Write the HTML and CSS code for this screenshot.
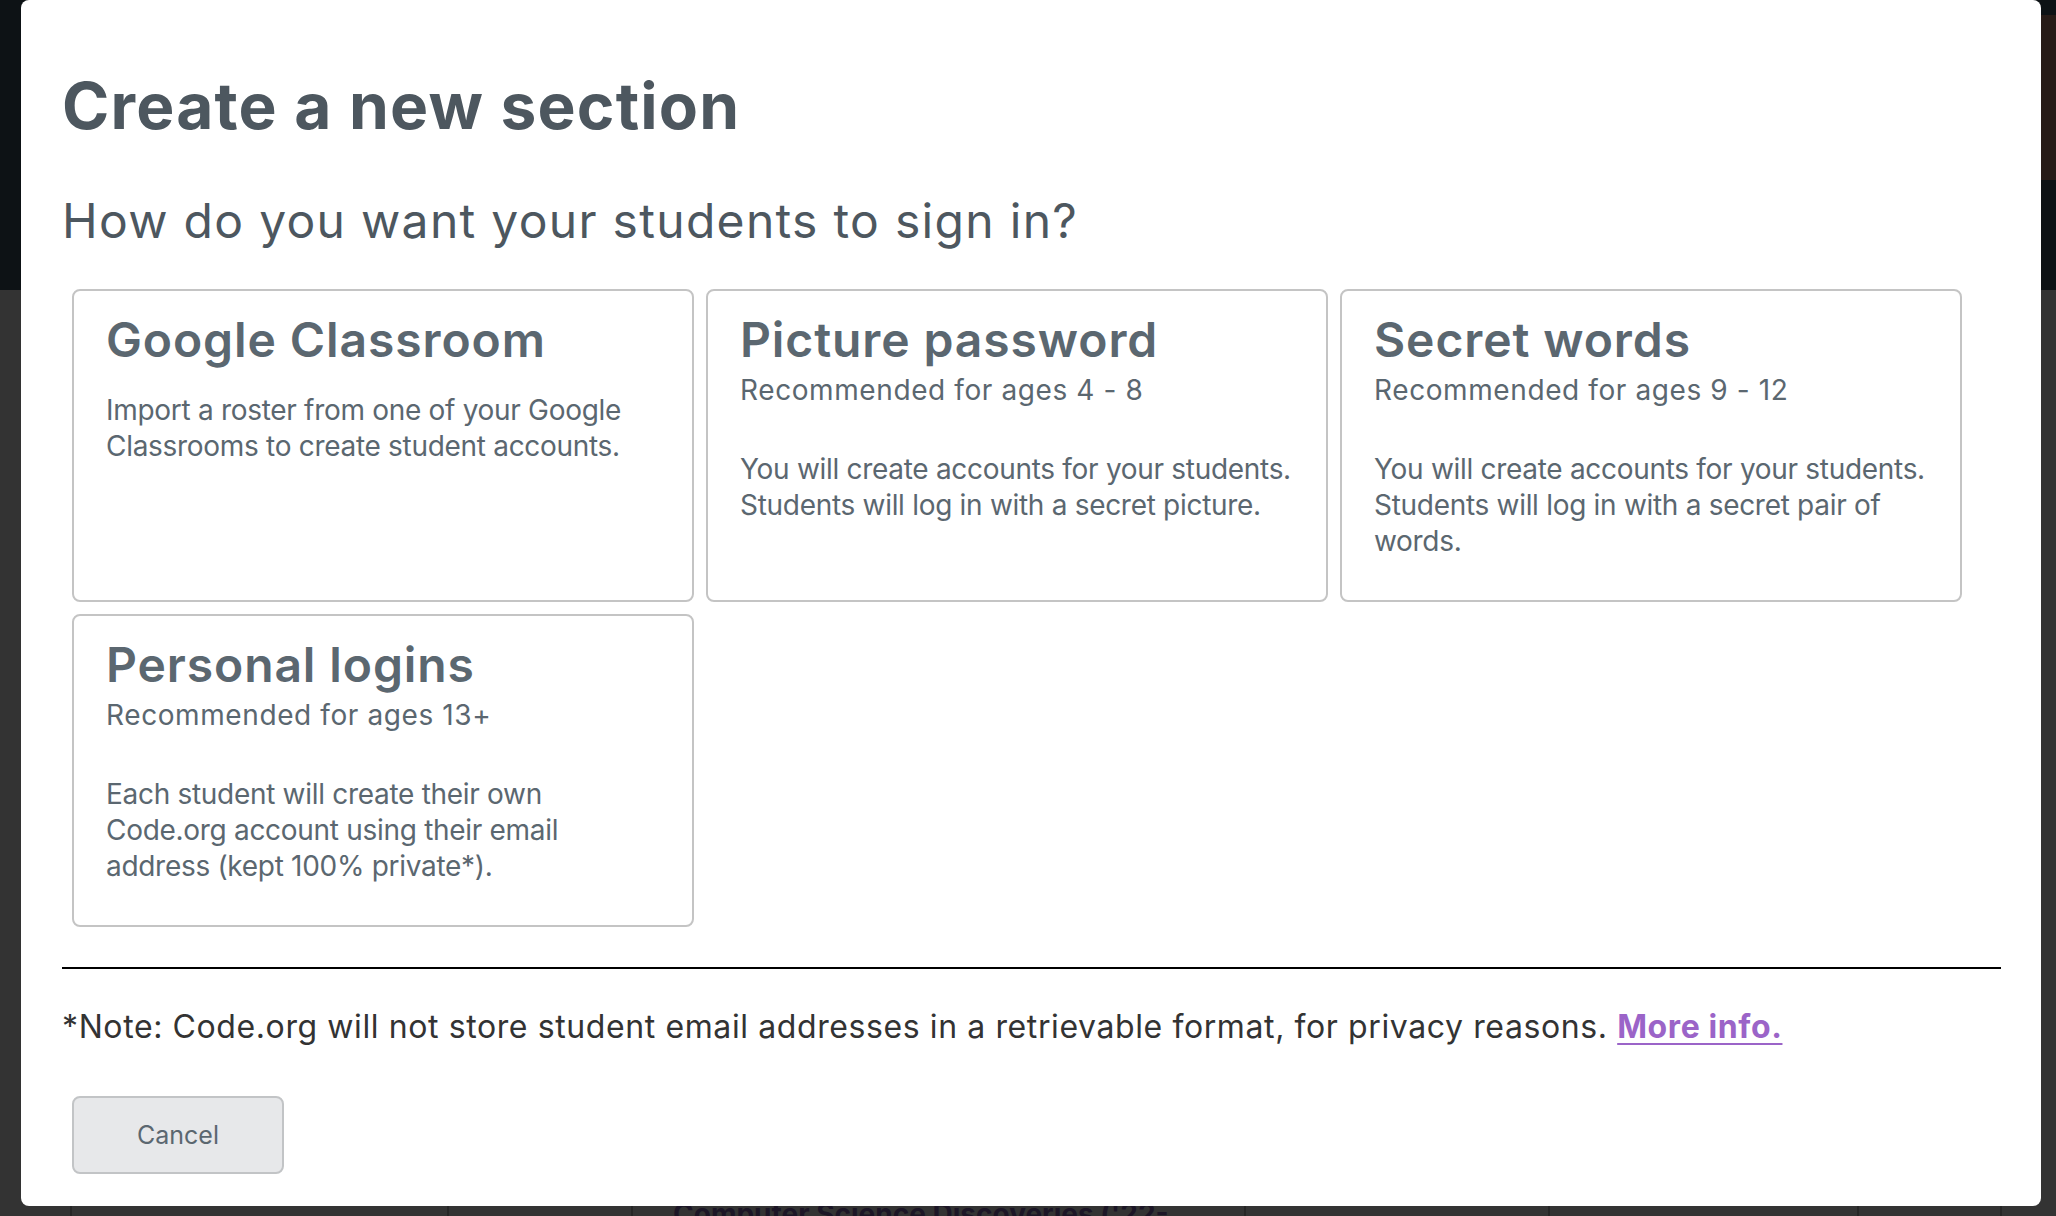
FILE: index.html
```html
<!DOCTYPE html>
<html lang="en">
<head>
    <meta charset="UTF-8">
    <title>Create a new section</title>
    <link rel="stylesheet" href="styles.css">
</head>
<body>
    <div class="page">
        <div class="page-header">
            <div class="header-photo"></div>
        </div>
        <div class="page-body">
            <div class="section-row">
                <div class="cell cell-1"></div>
                <div class="cell cell-2"></div>
                <div class="cell cell-3"></div>
                <div class="cell cell-4">Computer Science Discoveries ('22-'23)</div>
                <div class="cell cell-5"></div>
                <div class="cell cell-6"></div>
                <div class="cell cell-7"></div>
                <div class="cell cell-8"></div>
            </div>
        </div>
    </div>

    <div class="modal">
        <h1>Create a new section</h1>
        <h2>How do you want your students to sign in?</h2>

        <div class="login-types">
            <div class="login-card">
                <div class="card-title">Google Classroom</div>
                <p class="card-desc">Import a roster from one of your Google Classrooms to create student accounts.</p>
            </div>
            <div class="login-card">
                <div class="card-title">Picture password</div>
                <div class="card-ages">Recommended for ages 4 - 8</div>
                <p class="card-desc">You will create accounts for your students. Students will log in with a secret picture.</p>
            </div>
            <div class="login-card">
                <div class="card-title">Secret words</div>
                <div class="card-ages">Recommended for ages 9 - 12</div>
                <p class="card-desc">You will create accounts for your students. Students will log in with a secret pair of words.</p>
            </div>
            <div class="login-card">
                <div class="card-title">Personal logins</div>
                <div class="card-ages">Recommended for ages 13+</div>
                <p class="card-desc">Each student will create their own Code.org account using their email address (kept 100% private*).</p>
            </div>
        </div>

        <hr>

        <p class="note">*Note: Code.org will not store student email addresses in a retrievable format, for privacy reasons. <a href="#">More info.</a></p>

        <button class="cancel">Cancel</button>
    </div>
</body>
</html>
```

FILE: styles.css
```css
* {
    box-sizing: border-box;
}

body {
    margin: 0;
    height: 1216px;
    overflow: hidden;
    background: #333;
    font-family: Inter, 'Noto Sans', sans-serif;
}

/* page behind the dialog, already dimmed */
.page-header {
    height: 290px;
    background: #0d1215;
    display: flex;
    justify-content: flex-end;
    padding-top: 15px;
}

.header-photo {
    width: 40px;
    height: 165px;
    background: #271b17;
}

.page-body {
    padding-top: 895px;
}

.section-row {
    display: flex;
    height: 80px;
}

.cell {
    border-left: 2px solid #262626;
    padding: 12px 0 0 40px;
    font-size: 28px;
    font-weight: 700;
    color: #1c1626;
}

.cell-1 { width: 70px; border-left: none; }
.cell-2 { width: 377px; }
.cell-3 { width: 184px; }
.cell-4 { width: 613px; padding-right: 60px; }
.cell-5 { width: 304px; }
.cell-6 { width: 309px; }
.cell-7 { width: 143px; }
.cell-8 { flex: 1; }

/* dialog */
.modal {
    position: absolute;
    top: 0;
    left: 21px;
    width: 2020px;
    background: white;
    border-radius: 8px;
    padding: 68px 40px 32px 41px;
}

h1 {
    margin: 0;
    font-size: 64px;
    font-weight: 700;
    line-height: 1.2;
    letter-spacing: 1.2px;
    color: #4d575f;
}

h2 {
    margin: 47px 0 0;
    font-size: 48px;
    font-weight: 400;
    line-height: 1.2;
    letter-spacing: 1.3px;
    color: #4d575f;
}

.login-types {
    display: grid;
    grid-template-columns: repeat(3, 1fr);
    gap: 12px;
    margin: 40px 39px 0 10px;
}

.login-card {
    border: 2px solid #c4c4c4;
    border-radius: 8px;
    padding: 23px 28px 41px 32px;
    color: #5b6770;
}

.card-title {
    font-size: 48px;
    font-weight: 600;
    line-height: 1.1;
    letter-spacing: 0.9px;
}

.card-ages {
    margin-top: 5px;
    font-size: 28px;
    line-height: 36px;
    letter-spacing: 0.6px;
}

.card-desc {
    margin: 25px 0 0;
    font-size: 28px;
    line-height: 36px;
    letter-spacing: -0.3px;
}

.card-ages + .card-desc {
    margin-top: 43px;
}

hr {
    margin: 40px 0 0;
    border: 0;
    border-top: 2px solid #000;
}

.note {
    margin: 37px 0 0;
    font-size: 32px;
    line-height: 42px;
    letter-spacing: 0.6px;
    color: #333;
}

.note a {
    color: #9b64c8;
    font-weight: 700;
    text-decoration-thickness: 2px;
    text-underline-offset: 5px;
}

.cancel {
    display: block;
    margin: 48px 0 0 10px;
    width: 212px;
    height: 78px;
    background: #e7e8ea;
    border: 2px solid #c2c4c6;
    border-radius: 8px;
    font-family: Inter, 'Noto Sans', sans-serif;
    font-size: 25px;
    color: #5b6770;
    cursor: pointer;
}
```
